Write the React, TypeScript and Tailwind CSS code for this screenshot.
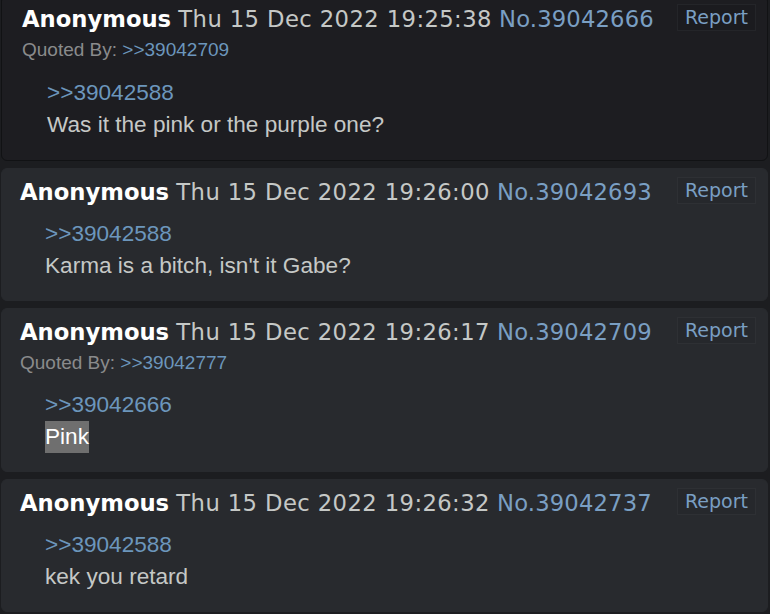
type Post = {
  no: string;
  time: string;
  quotedBy?: string;
  quote: string;
  body: string;
  highlight?: boolean;
  spoiler?: boolean;
};

const posts: Post[] = [
  {
    no: "39042666",
    time: "Thu 15 Dec 2022 19:25:38",
    quotedBy: "39042709",
    quote: "39042588",
    body: "Was it the pink or the purple one?",
    highlight: true,
  },
  {
    no: "39042693",
    time: "Thu 15 Dec 2022 19:26:00",
    quote: "39042588",
    body: "Karma is a bitch, isn't it Gabe?",
  },
  {
    no: "39042709",
    time: "Thu 15 Dec 2022 19:26:17",
    quotedBy: "39042777",
    quote: "39042666",
    body: "Pink",
    spoiler: true,
  },
  {
    no: "39042737",
    time: "Thu 15 Dec 2022 19:26:32",
    quote: "39042588",
    body: "kek you retard",
  },
];

function PostCard({ post }: { post: Post }) {
  const card = post.highlight
    ? "bg-[#1d1d21] border border-[#111214] pl-[20px] pb-[19px]"
    : "bg-[#282a2e] border border-[#282a2e] pl-[18px] pb-[18px]";
  const report = post.highlight
    ? "border-[#242529] bg-[#1b1b1f]"
    : "border-[#2e3034] bg-[#26282c]";

  return (
    <div className={`${card} rounded-[6px] pr-[11px] pt-[8px]`}>
      <div className="flex items-start justify-between">
        <div className="font-['DejaVu_Sans',sans-serif] text-[22.7px] leading-[30px] text-[#c5c8c6] whitespace-nowrap">
          <span className="font-bold text-white">Anonymous</span>{" "}
          <span className="tracking-[0.4px]">{post.time}</span>{" "}
          <span className="tracking-[0.15px] text-[#7a9fc3]">No.{post.no}</span>
        </div>
        <button
          className={`${report} border font-['DejaVu_Sans',sans-serif] text-[19px] leading-[25px] text-[#7a9fc3] px-[7px]`}
        >
          Report
        </button>
      </div>
      {post.quotedBy && (
        <div className="font-['Liberation_Sans',Arial,sans-serif] text-[19px] leading-[31px] text-[#8a8b8c]">
          Quoted By: <span className="text-[#6c96bc]">&gt;&gt;{post.quotedBy}</span>
        </div>
      )}
      <div
        className={`${post.highlight ? "mt-[12px]" : "mt-[11px]"} ml-[25px] font-['Liberation_Sans',Arial,sans-serif] text-[22.6px] leading-[32px] text-[#c5c8c6]`}
      >
        <div className="text-[#6c96bc]">&gt;&gt;{post.quote}</div>
        <div>
          {post.spoiler ? (
            <span className="inline-block bg-[#6f6f6f] text-white">{post.body}</span>
          ) : (
            post.body
          )}
        </div>
      </div>
    </div>
  );
}

export default function App() {
  return (
    <div className="h-[614px] overflow-hidden bg-[#1c1d20] pl-[1px] pr-[2px]">
      <div className="-mt-[5px] flex flex-col gap-[7px]">
        {posts.map((p) => (
          <PostCard key={p.no} post={p} />
        ))}
      </div>
    </div>
  );
}
